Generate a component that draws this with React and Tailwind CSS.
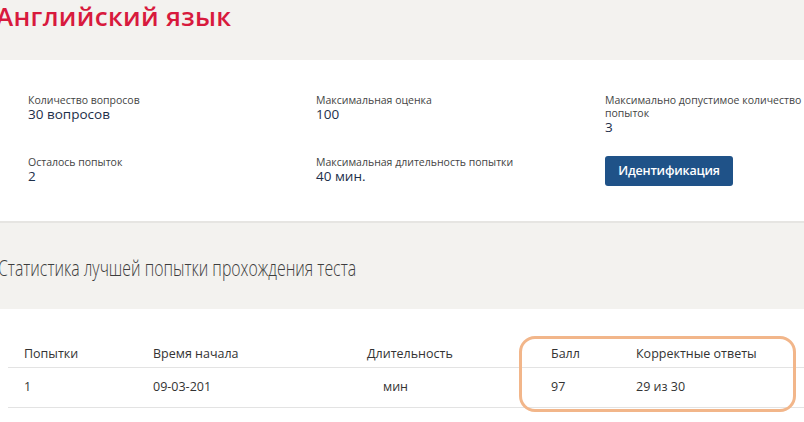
import React from 'react'

const info = [
  [
    { label: 'Количество вопросов', value: '30 вопросов', w: 'w-[288px]' },
    { label: 'Максимальная оценка', value: '100', w: 'w-[289px]' },
    { label: 'Максимально допустимое количество попыток', value: '3', w: 'w-[205px]' },
  ],
  [
    { label: 'Осталось попыток', value: '2', w: 'w-[288px]' },
    { label: 'Максимальная длительность попытки', value: '40 мин.', w: 'w-[289px]' },
  ],
]

const cols = [
  { head: 'Попытки', cell: '1', w: 'w-[145px] pl-[16px]', pad: '' },
  { head: 'Время начала', cell: '09-03-201', w: 'w-[214px]', pad: '' },
  { head: 'Длительность', cell: 'мин', w: 'w-[184px]', pad: 'pl-[16px]' },
  { head: 'Балл', cell: '97', w: 'w-[85px]', pad: '' },
  { head: 'Корректные ответы', cell: '29 из 30', w: 'flex-1', pad: '' },
]

function InfoItem({ it }) {
  return (
    <div className={`${it.w} shrink-0`}>
      <p className="text-[10.5px] leading-[13px] text-[#444]">{it.label}</p>
      <p className="text-[13.5px] leading-[15px] text-[#1d2f4a]">{it.value}</p>
    </div>
  )
}

export default function App() {
  return (
    <div className="relative w-[804px] h-[422px] overflow-hidden bg-[#f3f2ef] font-['Open_Sans',sans-serif]">
      {/* Title */}
      <div className="h-[60px]">
        <h1 className="ml-[-4px] pt-[1px] text-[26px] leading-[30px] font-semibold text-[#d81a3d] tracking-[0.3px] whitespace-nowrap">
          Английский язык
        </h1>
      </div>

      {/* Info card */}
      <div className="h-[163px] bg-white border-b-2 border-[#e6e5e2] pl-[28px] pt-[34px]">
        <div className="flex h-[62px]">
          {info[0].map(it => <InfoItem key={it.label} it={it} />)}
        </div>
        <div className="flex">
          {info[1].map(it => <InfoItem key={it.label} it={it} />)}
          <button className="h-[30px] w-[128px] rounded-[3px] bg-[#1f5288] text-white text-[12.5px] font-semibold tracking-[-0.2px]">
            Идентификация
          </button>
        </div>
      </div>

      {/* Stats heading */}
      <div className="h-[86px] flex items-center">
        <h2 className="ml-[-2px] mt-[3px] origin-left scale-x-[0.72] whitespace-nowrap text-[22px] font-light text-[#3d3d3d]">
          Статистика лучшей попытки прохождения теста
        </h2>
      </div>

      {/* Table */}
      <div className="bg-white h-full pt-[32px] pl-[8px] text-[12.5px] text-[#333]">
        <div className="flex h-[27px] items-center border-b border-[#e3e3e3]">
          {cols.map(c => (
            <div key={c.head} className={`${c.w} shrink-0`}>{c.head}</div>
          ))}
        </div>
        <div className="flex h-[40px] items-center border-b border-[#e3e3e3]">
          {cols.map(c => (
            <div key={c.head} className={`${c.w} shrink-0 ${c.pad}`}>{c.cell}</div>
          ))}
        </div>
      </div>

      {/* Highlight annotation */}
      <div className="absolute left-[519px] top-[336px] w-[277px] h-[76px] rounded-[16px] border-[3px] border-[#f2b68a]" />
    </div>
  )
}
